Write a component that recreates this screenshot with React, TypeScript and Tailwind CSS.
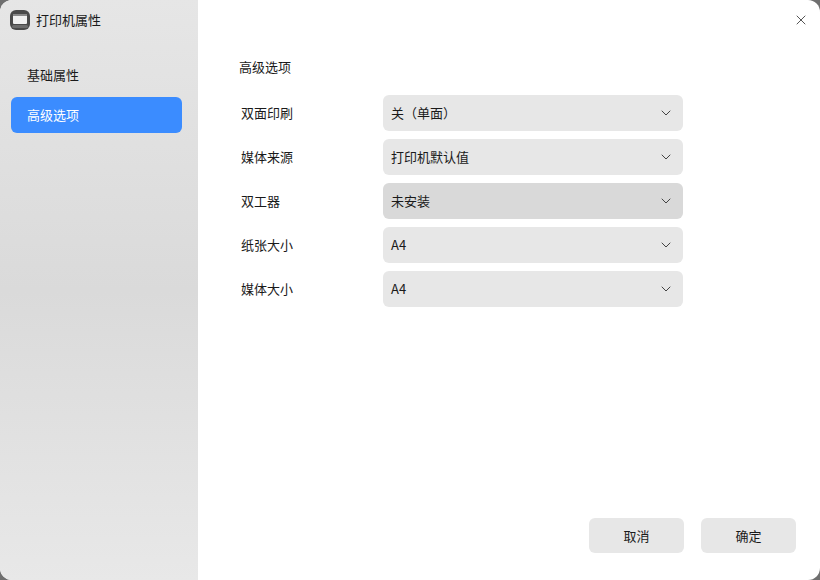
import React from 'react'
import { ChevronDown, X } from 'lucide-react'

const font = "font-['Noto_Sans_CJK_SC','Liberation_Sans',sans-serif]"

const rows = [
  { label: '双面印刷', value: '关（单面）', active: false },
  { label: '媒体来源', value: '打印机默认值', active: false },
  { label: '双工器', value: '未安装', active: true },
  { label: '纸张大小', value: 'A4', active: false },
  { label: '媒体大小', value: 'A4', active: false },
]

const PrinterIcon = () => (
  <svg width="20" height="20" viewBox="0 0 20 20">
    <rect x="0" y="0" width="20" height="20" rx="6" fill="#4a4a4a" />
    <rect x="3" y="4" width="14" height="10" rx="1" fill="#f1f1f1" />
    <rect x="3" y="4" width="14" height="2" fill="#8a8a8a" />
    <rect x="2" y="15" width="16" height="3" rx="1.5" fill="#6d6d6d" />
  </svg>
)

const App = () => {
  return (
    <div className={`${font} h-[580px] w-[820px] overflow-hidden bg-[#6f6f6f] text-[13px] text-[#1a1a1a]`}>
      <div className="flex h-full w-full overflow-hidden rounded-xl bg-white">
        <aside className="flex w-[198px] shrink-0 flex-col bg-gradient-to-b from-[#e6e6e6] via-[#dadada] to-[#e8e8e8]">
          <div className="flex h-[40px] items-center gap-[6px] pl-[10px]">
            <PrinterIcon />
            <span>打印机属性</span>
          </div>
          <nav className="mt-[17px] flex flex-col gap-1 pl-[11px] pr-4">
            <div className="flex h-9 items-center rounded-md px-4">基础属性</div>
            <div className="flex h-9 items-center rounded-md bg-[#3b8cff] px-4 text-white">高级选项</div>
          </nav>
        </aside>

        <main className="flex min-w-0 flex-1 flex-col">
          <div className="flex h-[40px] items-start justify-end pr-[11px] pt-[12px]">
            <X size={16} strokeWidth={1.25} className="text-[#333]" />
          </div>
          <div className="pl-[41px] pt-[17px] leading-5">高级选项</div>
          <div className="mt-[18px] flex flex-col gap-2 pl-[43px]">
            {rows.map((row) => (
              <div key={row.label} className="flex items-center">
                <div className="w-[142px]">{row.label}</div>
                <div
                  className={`flex h-9 w-[300px] items-center justify-between rounded-md pl-2 pr-[9px] ${
                    row.active ? 'bg-[#d9d9d9]' : 'bg-[#e7e7e7]'
                  }`}
                >
                  <span>{row.value}</span>
                  <ChevronDown size={16} strokeWidth={1.5} className="text-[#444]" />
                </div>
              </div>
            ))}
          </div>
          <div className="mt-auto flex justify-end gap-[17px] pb-[27px] pr-6">
            <button className="h-[35px] w-[95px] rounded-md bg-[#e7e7e7]">取消</button>
            <button className="h-[35px] w-[95px] rounded-md bg-[#e7e7e7]">确定</button>
          </div>
        </main>
      </div>
    </div>
  )
}

export default App
